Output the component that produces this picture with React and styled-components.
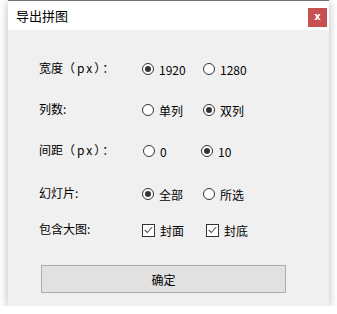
import styled, { createGlobalStyle } from 'styled-components';

const GlobalStyle = createGlobalStyle`
	html, body {
		margin: 0;
		padding: 0;
		background: #ffffff;
	}
	body {
		font-family: "Noto Sans CJK SC", "Noto Sans", sans-serif;
		font-size: 12px;
		color: #000;
	}
`;

const Window = styled.div`
	margin-left: 8px;
	width: 321px;
	height: 305px;
	border-top: 1px solid #707070;
	background: #f0f0f0;
	box-shadow: 0 2px 9px rgba(0, 0, 0, 0.28);
	display: flex;
	flex-direction: column;
`;

const TitleBar = styled.div`
	height: 29px;
	background: #ffffff;
	display: flex;
	align-items: flex-start;
	justify-content: space-between;
	padding-left: 8px;
	padding-right: 2px;
`;

const Title = styled.span`
	font-size: 13px;
	line-height: 13px;
	margin-top: 8px;
`;

const CloseButton = styled.div`
	width: 19px;
	height: 19px;
	margin-top: 7px;
	background: #c75050;
	color: #fff;
	font-family: "DejaVu Sans", sans-serif;
	font-weight: bold;
	font-size: 10px;
	line-height: 17px;
	text-align: center;
`;

const Body = styled.div`
	padding: 27px 0 0 31px;
	display: flex;
	flex-direction: column;
`;

const Row = styled.div`
	height: 24px;
	margin-top: ${(p) => p.$gap || 0}px;
	display: flex;
	align-items: center;
`;

const Label = styled.div`
	width: 103px;
	padding-bottom: 3px;
	white-space: nowrap;
`;

const Paren = styled.span`
	letter-spacing: 2px;
`;

const Option = styled.label`
	width: ${(p) => p.$width || 61}px;
	margin-left: ${(p) => p.$shift || 0}px;
	display: flex;
	align-items: center;
	gap: 5px;
	white-space: nowrap;
`;

const RadioMark = styled.span`
	width: 10px;
	height: 10px;
	border: 1px solid #333;
	border-radius: 50%;
	background: #fff;
	display: flex;
	align-items: center;
	justify-content: center;

	&::after {
		content: '';
		width: 6px;
		height: 6px;
		border-radius: 50%;
		background: #333;
		display: ${(p) => (p.$on ? 'block' : 'none')};
	}
`;

const CheckMark = styled.span`
	width: 11px;
	height: 11px;
	border: 1px solid #333;
	background: #fff;
	display: flex;
	align-items: center;
	justify-content: center;
`;

const OkButton = styled.button`
	margin: 23px 0 0 2px;
	width: 245px;
	height: 28px;
	background: #e1e1e1;
	border: 1px solid #adadad;
	font-family: inherit;
	font-size: 12px;
	color: #000;
	padding: 0;
`;

const Radio = ({ on, children, width, shift }) => (
	<Option $width={width} $shift={shift}>
		<RadioMark $on={on} />
		<span>{children}</span>
	</Option>
);

const Check = ({ children, width }) => (
	<Option $width={width}>
		<CheckMark>
			<svg width="9" height="8" viewBox="0 0 9 8">
				<path d="M0.8 4 L3.3 6.5 L8.2 1" fill="none" stroke="#555" strokeWidth="1.1" />
			</svg>
		</CheckMark>
		<span>{children}</span>
	</Option>
);

export default function App() {
	return (
		<>
			<GlobalStyle />
			<Window>
				<TitleBar>
					<Title>导出拼图</Title>
					<CloseButton>x</CloseButton>
				</TitleBar>
				<Body>
					<Row>
						<Label>宽度<Paren>（px）</Paren>：</Label>
						<Radio on>1920</Radio>
						<Radio>1280</Radio>
					</Row>
					<Row $gap={17}>
						<Label>列数:</Label>
						<Radio>单列</Radio>
						<Radio on>双列</Radio>
					</Row>
					<Row $gap={17}>
						<Label>间距<Paren>（px）</Paren>：</Label>
						<Radio width={58} shift={1}>0</Radio>
						<Radio on>10</Radio>
					</Row>
					<Row $gap={19}>
						<Label>幻灯片:</Label>
						<Radio on>全部</Radio>
						<Radio>所选</Radio>
					</Row>
					<Row $gap={12}>
						<Label>包含大图:</Label>
						<Check width={64}>封面</Check>
						<Check>封底</Check>
					</Row>
					<OkButton>确定</OkButton>
				</Body>
			</Window>
		</>
	);
}
